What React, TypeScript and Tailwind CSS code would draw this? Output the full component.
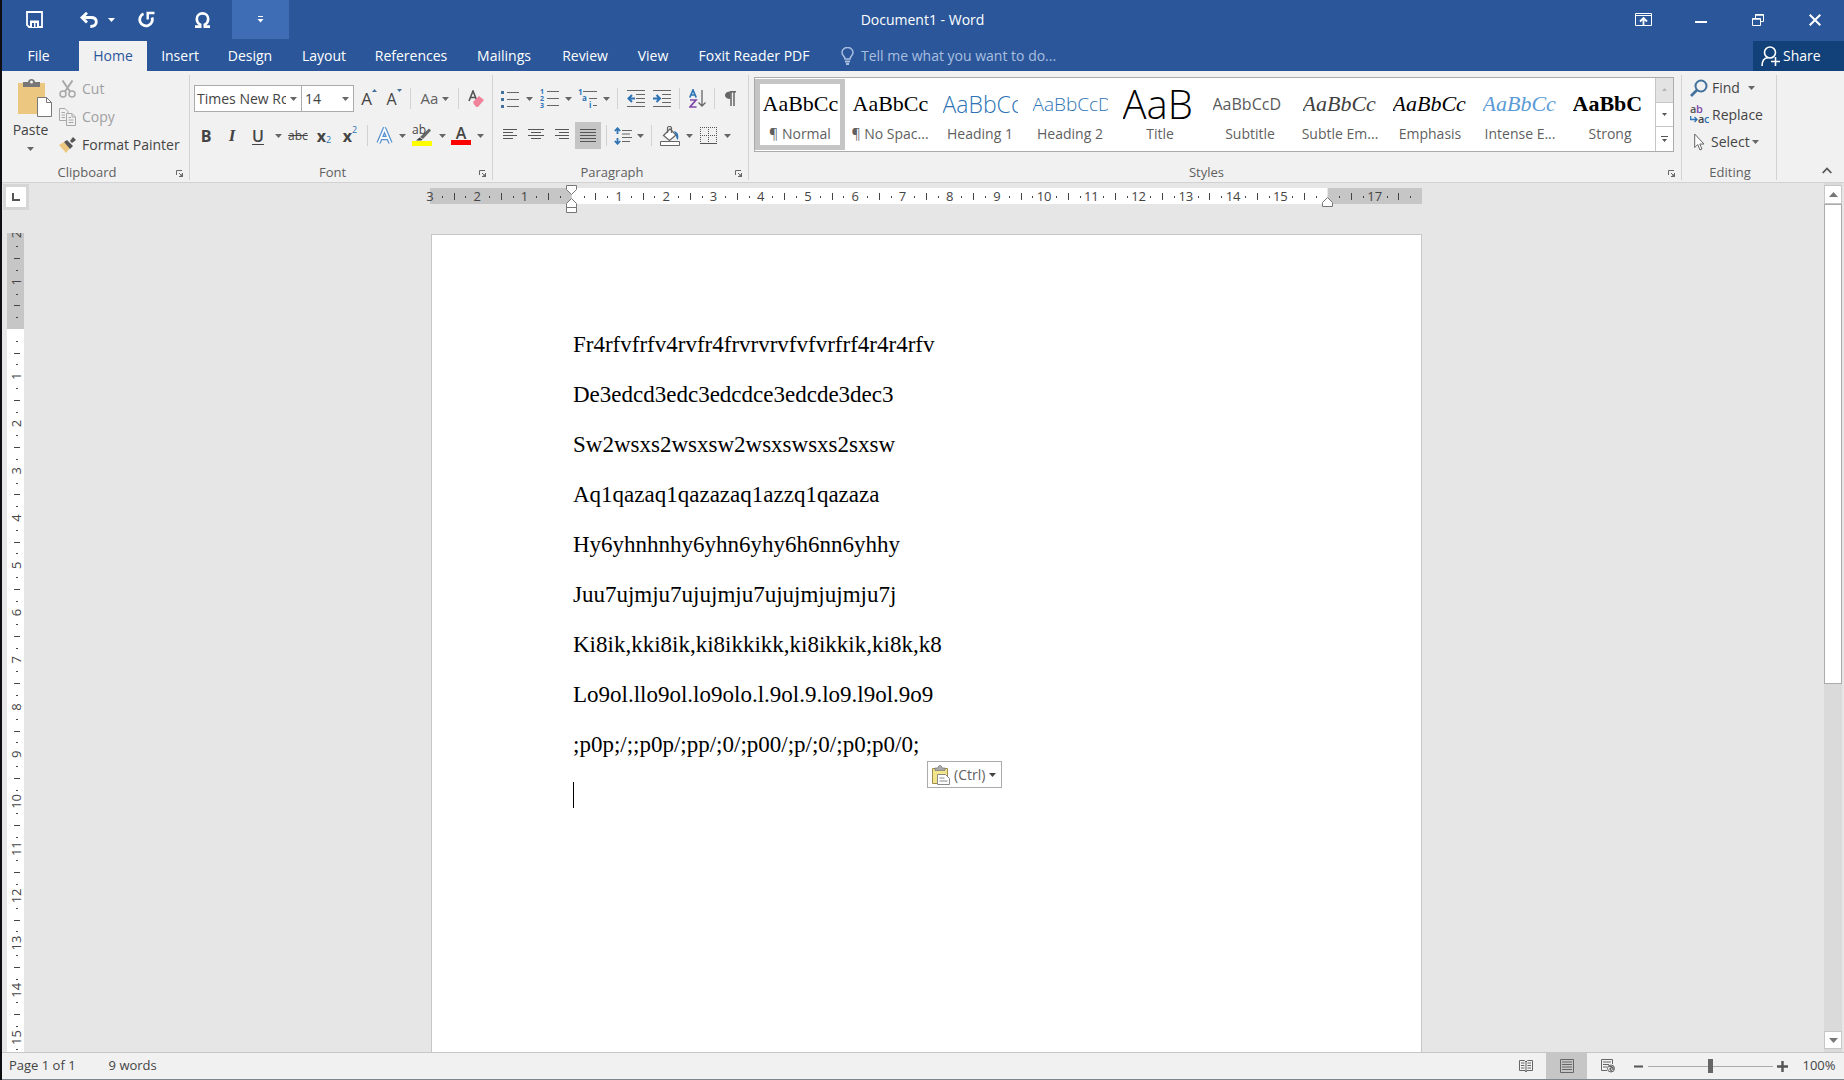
import type { ReactNode } from 'react';

const TABS = [
  { label: 'Insert', width: 'w-[66px]' },
  { label: 'Design', width: 'w-[74px]' },
  { label: 'Layout', width: 'w-[74px]' },
  { label: 'References', width: 'w-[100px]' },
  { label: 'Mailings', width: 'w-[86px]' },
  { label: 'Review', width: 'w-[76px]' },
  { label: 'View', width: 'w-[60px]' },
  { label: 'Foxit Reader PDF', width: 'w-[142px]' },
];

const STYLES = [
  { name: '¶ Normal', sample: 'AaBbCc', look: 'font-[Liberation_Serif,serif] text-[22px] text-black' },
  { name: '¶ No Spac...', sample: 'AaBbCc', look: 'font-[Liberation_Serif,serif] text-[22px] text-black' },
  { name: 'Heading 1', sample: 'AaBbCc', look: 'font-light text-[23px] text-[#2e74b5]' },
  { name: 'Heading 2', sample: 'AaBbCcD', look: 'font-light text-[19px] text-[#2e74b5]' },
  { name: 'Title', sample: 'AaB', look: 'font-light text-[40px] text-black' },
  { name: 'Subtitle', sample: 'AaBbCcD', look: 'text-[16px] text-[#5a5a5a]' },
  { name: 'Subtle Em...', sample: 'AaBbCc', look: 'font-[Liberation_Serif,serif] italic text-[22px] text-[#404040]' },
  { name: 'Emphasis', sample: 'AaBbCc', look: 'font-[Liberation_Serif,serif] italic text-[22px] text-black' },
  { name: 'Intense E...', sample: 'AaBbCc', look: 'font-[Liberation_Serif,serif] italic text-[22px] text-[#5b9bd5]' },
  { name: 'Strong', sample: 'AaBbC', look: 'font-[Liberation_Serif,serif] font-bold text-[22px] text-black' },
];

const LINES = [
  'Fr4rfvfrfv4rvfr4frvrvrvfvfvrfrf4r4r4rfv',
  'De3edcd3edc3edcdce3edcde3dec3',
  'Sw2wsxs2wsxsw2wsxswsxs2sxsw',
  'Aq1qazaq1qazazaq1azzq1qazaza',
  'Hy6yhnhnhy6yhn6yhy6h6nn6yhhy',
  'Juu7ujmju7ujujmju7ujujmjujmju7j',
  'Ki8ik,kki8ik,ki8ikkikk,ki8ikkik,ki8k,k8',
  'Lo9ol.llo9ol.lo9olo.l.9ol.9.lo9.l9ol.9o9',
  ';p0p;/;;p0p/;pp/;0/;p00/;p/;0/;p0;p0/0;',
];

// pixels per centimetre at 100% zoom
const CM = 47.24;

function Arrow({ className = 'text-[#666]' }: { className?: string }) {
  return (
    <svg className={`shrink-0 ${className}`} width="7" height="4" viewBox="0 0 7 4" fill="currentColor">
      <path d="M0 0h7L3.5 4z" />
    </svg>
  );
}

function Tool({ label, width, active, children }: { label: string; width: string; active?: boolean; children: ReactNode }) {
  return (
    <button
      type="button"
      aria-label={label}
      className={`flex h-[27px] shrink-0 items-center justify-center ${width} ${active ? 'bg-[#c5c5c5]' : ''}`}
    >
      {children}
    </button>
  );
}

function More({ label, width = 'w-3' }: { label: string; width?: string }) {
  return (
    <Tool label={`${label} options`} width={width}>
      <Arrow />
    </Tool>
  );
}

function Split({ width }: { width: string }) {
  return (
    <div className={`flex shrink-0 justify-center ${width}`}>
      <div className="h-[21px] w-px bg-[#d2d2d2]" />
    </div>
  );
}

function Group({ label, width, launcher = true, children }: { label: string; width: string; launcher?: boolean; children: ReactNode }) {
  return (
    <section aria-label={label} className={`flex h-[111px] flex-col ${width}`}>
      <div className="flex min-h-0 flex-1 justify-between">
        <div className="min-w-0 flex-1">{children}</div>
        <div className="my-1 -mb-4 w-px shrink-0 bg-[#d2d2d2]" />
      </div>
      <div className="flex h-[18px] items-center pr-[7px] text-[13px] text-[#5f5f5f]">
        <span className={`flex-1 text-center ${launcher ? 'pr-1' : 'pl-2'}`}>{label}</span>
        {launcher && (
          <button type="button" aria-label={`${label} settings`}>
            <svg width="7" height="7" viewBox="0 0 7 7" fill="none" stroke="#666">
              <path d="M.5 5V.5H6M3 3l3 3M6.5 3v3.5H3" />
              <path d="M4 6.5L6.5 4v2.5z" fill="#666" />
            </svg>
          </button>
        )}
      </div>
    </section>
  );
}

function Lines({ rows }: { rows: [number, number][] }) {
  return (
    <svg width="16" height="14" viewBox="0 0 16 14" stroke="#555">
      {rows.map(([from, to], i) => (
        <path key={i} d={`M${from} ${i * 3 + 0.5}H${to}`} />
      ))}
    </svg>
  );
}

function TitleBar() {
  return (
    <div className="flex h-[41px] items-start text-white">
      <div className="flex flex-1">
        <button type="button" aria-label="Save" className="flex h-[39px] w-16 items-center justify-center">
          <svg width="17" height="17" viewBox="0 0 17 17">
            <path d="M1 1h15v15H3l-2-2z" fill="none" stroke="#fff" strokeWidth="1.8" />
            <path d="M4 9.5h9V16H4z" fill="#fff" />
            <path d="M6 12h2v4H6zM9.500 12h1.500v4H9.500z" fill="#2b579a" />
          </svg>
        </button>
        <button type="button" aria-label="Undo" className="flex h-[39px] w-[62px] items-center justify-center gap-[10px]">
          <svg width="18" height="16" viewBox="0 0 18 16" fill="none" stroke="#fff" strokeWidth="2.800">
            <path d="M2 5.500h9c3 0 5.300 1.500 5.300 4.300s-2 4.700-6 4.700" />
            <path d="M7 .8L2 5.500l5 5" />
          </svg>
          <Arrow className="text-white" />
        </button>
        <button type="button" aria-label="Repeat" className="flex h-[39px] w-9 items-center justify-center">
          <svg width="17" height="17" viewBox="0 0 17 17" fill="none" stroke="#fff" strokeWidth="2.800">
            <path d="M5.500 2.800A6.300 6.300 0 1 0 14 6.500" />
            <path d="M9.700 8.500V2H16.500" strokeWidth="2.400" />
          </svg>
        </button>
        <button type="button" aria-label="Symbol" className="flex h-[39px] w-[68px] items-center justify-center pl-2">
          <svg width="17" height="16" viewBox="0 0 17 16" fill="none" stroke="#fff" strokeWidth="2.600">
            <path d="M1 14.600h5.200v-2C4 11.500 2.800 9.500 2.800 7c0-3.500 2.500-5.600 5.700-5.600S14.200 3.500 14.200 7c0 2.500-1.200 4.500-3.400 5.600v2H16" />
          </svg>
        </button>
        <button type="button" aria-label="Customize toolbar" className="flex h-[39px] w-[57px] items-center justify-center bg-[#3e6db5]">
          <svg width="7" height="7" viewBox="0 0 7 7" fill="#fff">
            <path d="M1 0h5v1H1zM.5 3h6L3.500 6.500z" />
          </svg>
        </button>
      </div>
      <h1 className="pt-[10px] text-sm">Document1 - Word</h1>
      <div className="flex flex-1 justify-end pr-px">
        <button type="button" aria-label="Ribbon display" className="flex h-[39px] w-[57px] items-center justify-center">
          <svg width="17" height="13" viewBox="0 0 17 13" fill="none" stroke="#fff">
            <path d="M.5.5h16v12H.5zM.5 2.500h16" />
            <path d="M8.500 12V5M5 8.500L8.500 5 12 8.500" strokeWidth="1.800" />
          </svg>
        </button>
        <button type="button" aria-label="Minimize" className="flex h-[39px] w-[57px] items-center justify-center pt-1">
          <svg width="12" height="2" viewBox="0 0 12 2" fill="#fff">
            <path d="M0 0h12v2H0z" />
          </svg>
        </button>
        <button type="button" aria-label="Restore" className="flex h-[39px] w-[57px] items-center justify-center">
          <svg width="12" height="12" viewBox="0 0 12 12" fill="none" stroke="#fff">
            <path d="M.5 4.500h8v7h-8zM3.500 4V.5h8v7H9" />
            <path d="M.5 5h8M3.500 1h8" strokeWidth="1.500" />
          </svg>
        </button>
        <button type="button" aria-label="Close" className="flex h-[39px] w-[57px] items-center justify-center">
          <svg width="12" height="12" viewBox="0 0 12 12" stroke="#fff" strokeWidth="2">
            <path d="M.7.7l10.600 10.600M11.300.7L.7 11.300" />
          </svg>
        </button>
      </div>
    </div>
  );
}

function TabBar() {
  return (
    <nav className="flex h-[30px] text-sm text-white">
      <button type="button" className="w-[77px] pr-1">
        File
      </button>
      <button type="button" className="w-[68px] bg-[#f1f1f1] text-[#2b579a]">
        Home
      </button>
      {TABS.map((tab) => (
        <button key={tab.label} type="button" className={`whitespace-nowrap ${tab.width}`}>
          {tab.label}
        </button>
      ))}
      <label className="flex flex-1 items-center gap-[7px] pl-4">
        <svg width="13" height="18" viewBox="0 0 13 18" fill="none" stroke="#a9bfe0" strokeWidth="1.500">
          <path d="M4 12c0-2.500-3-3.500-3-6.500a5.500 5 0 0 1 11 0c0 3-3 4-3 6.500z" />
          <path d="M4 14.500h5M5 17h3" strokeWidth="2" />
        </svg>
        <input
          type="text"
          aria-label="Tell me"
          placeholder="Tell me what you want to do..."
          className="w-60 bg-transparent outline-none placeholder:text-[#a9bfe0]"
        />
      </label>
      <button type="button" className="flex w-[91px] items-center gap-[3px] bg-[#124078] pl-2">
        <svg width="19" height="20" viewBox="0 0 19 20" fill="none" stroke="#fff" strokeWidth="1.600">
          <circle cx="9" cy="6.500" r="5.500" />
          <path d="M1 20c0-5 2.500-8 6-8.500M14.500 11v9M10 15.500h9" />
        </svg>
        Share
      </button>
    </nav>
  );
}

function ClipboardGroup() {
  return (
    <Group label="Clipboard" width="w-[188px]">
      <div className="flex">
        <button type="button" className="flex w-[57px] flex-col items-center pt-2 text-sm text-[#444]">
          <svg className="ml-2" width="34" height="38" viewBox="0 0 34 38">
            <path d="M0 4h27v31H0z" fill="#ecc77f" />
            <path d="M5 8V3h5c0-4 7-4 7 0h5v5z" fill="#777" />
            <circle cx="13.500" cy="3" r="1.500" fill="#f1f1f1" />
            <path d="M19.500 18.500h9l5 5v14h-14z" fill="#fff" stroke="#777" />
            <path d="M28.500 18.500v5h5" fill="none" stroke="#777" />
          </svg>
          <span className="leading-[26px]">Paste</span>
          <Arrow className="mt-1 text-[#666]" />
        </button>
        <div className="flex flex-col pt-1 text-sm text-[#a0a0a0]">
          <button type="button" className="flex h-7 items-center gap-[6px]">
            <svg width="17" height="18" viewBox="0 0 17 18" fill="none" stroke="#a8a8a8" strokeWidth="1.500">
              <circle cx="4" cy="14" r="3" />
              <circle cx="13" cy="14" r="3" />
              <path d="M3.500.5L11 11.500M13.500.5L6 11.500" strokeWidth="2" />
            </svg>
            Cut
          </button>
          <button type="button" className="flex h-7 items-center gap-[6px]">
            <svg width="17" height="18" viewBox="0 0 17 18" fill="none" stroke="#a8a8a8">
              <path d="M7 12.500H.5V.5H6l3 3V5M2.500 4.500H6M2.500 7H6M2.500 9.500H6" />
              <path d="M7.500 5.500H13l3.500 3.500v8.500h-9zM13 5.500V9h3.500M9.500 9.500H12M9.500 12h5M9.500 14.500h5" />
            </svg>
            Copy
          </button>
          <button type="button" className="flex h-7 items-center gap-[6px] text-[#444]">
            <svg width="17" height="16" viewBox="0 0 17 16">
              <path d="M0 8l5-3 6 6-4 5z" fill="#ecc77f" />
              <path d="M5 5l3-2 6 6-3 3z" fill="#555" />
              <path d="M11 4l3-4 3 3-4 3z" fill="#555" />
            </svg>
            <span className="whitespace-nowrap">Format Painter</span>
          </button>
        </div>
      </div>
    </Group>
  );
}

function FontGroup() {
  return (
    <Group label="Font" width="w-[303px]">
      <div className="flex flex-col gap-[10px] pl-1 pt-[14px] text-[#444]">
        <div className="flex h-[27px] items-center">
          <div className="flex h-[27px] w-[108px] items-center border border-[#ababab] bg-white">
            <select aria-label="Font name" className="w-[91px] appearance-none overflow-hidden whitespace-nowrap pl-[2px] text-sm outline-none">
              <option>Times New Roman</option>
            </select>
            <div className="flex flex-1 justify-center">
              <Arrow />
            </div>
          </div>
          <div className="flex h-[27px] w-[52px] items-center border border-l-0 border-[#ababab] bg-white">
            <select aria-label="Font size" className="w-9 appearance-none pl-[3px] text-sm outline-none">
              <option>14</option>
            </select>
            <div className="flex flex-1 justify-center">
              <Arrow />
            </div>
          </div>
          <Tool label="Grow font" width="w-[30px]">
            <span className="text-[17px] leading-5">A</span>
            <svg className="mb-4" width="5" height="3" viewBox="0 0 5 3" fill="#41719c">
              <path d="M0 3h5L2.500 0z" />
            </svg>
          </Tool>
          <Tool label="Shrink font" width="w-5">
            <span className="text-base leading-5">A</span>
            <svg className="mb-4" width="5" height="3" viewBox="0 0 5 3" fill="#41719c">
              <path d="M0 0h5L2.500 3z" />
            </svg>
          </Tool>
          <Split width="w-3" />
          <Tool label="Change case" width="w-[38px]">
            <span className="pr-1 text-[15px] text-[#5f5f5f]">Aa</span>
            <Arrow />
          </Tool>
          <Split width="w-2" />
          <Tool label="Clear formatting" width="w-7">
            <svg width="16" height="18" viewBox="0 0 16 18">
              <path d="M1 11L5 1l4 10M2.500 7.500h5" fill="none" stroke="#555" strokeWidth="1.600" />
              <path d="M5 12l6-6 5 4-6 7H7z" fill="#f0839b" />
              <path d="M4 13l4 4" stroke="#f1f1f1" />
            </svg>
          </Tool>
        </div>
        <div className="flex h-[27px] items-center">
          <Tool label="Bold" width="w-6">
            <b className="text-base">B</b>
          </Tool>
          <Tool label="Italic" width="w-7">
            <i className="font-[Liberation_Serif,serif] text-[17px] font-bold">I</i>
          </Tool>
          <Tool label="Underline" width="w-6">
            <span className="text-base font-semibold underline underline-offset-2">U</span>
          </Tool>
          <More label="Underline" width="w-4" />
          <Tool label="Strikethrough" width="w-6">
            <s className="text-[12px]">abc</s>
          </Tool>
          <Tool label="Subscript" width="w-7">
            <b className="text-base">x</b>
            <span className="pt-2 text-[9px] text-[#2e74b5]">2</span>
          </Tool>
          <Tool label="Superscript" width="w-6">
            <b className="text-base">x</b>
            <span className="pb-3 text-[9px] text-[#2e74b5]">2</span>
          </Tool>
          <Split width="w-[10px]" />
          <Tool label="Text effects" width="w-6">
            <svg width="17" height="18" viewBox="0 0 17 18">
              <path d="M2.500 16L8.500 2l6 14M5 11h7" fill="none" stroke="#5b93cf" strokeWidth="4.400" strokeLinejoin="round" />
              <path d="M2.500 16L8.500 2l6 14M5 11h7" fill="none" stroke="#fff" strokeWidth="1.800" />
            </svg>
          </Tool>
          <More label="Text effects" width="w-3" />
          <Tool label="Highlight color" width="w-7">
            <span className="relative flex h-5 w-5 items-end">
              <span className="absolute -top-1 left-0 text-[12px] leading-4">ab</span>
              <svg width="20" height="19" viewBox="0 0 20 19">
                <path d="M17 1.500l2 2L11 12l-3-2z" fill="#666" />
                <path d="M7.500 10.500l3 2-1 1H4z" fill="#444" />
                <path d="M0 14h20v5H0z" fill="#ff0" />
              </svg>
            </span>
          </Tool>
          <More label="Highlight color" />
          <Tool label="Font color" width="w-[26px]">
            <span className="flex w-5 flex-col items-center border-b-[5px] border-[#f00] text-base font-semibold leading-[14px]">A</span>
          </Tool>
          <More label="Font color" />
        </div>
      </div>
    </Group>
  );
}

function ParagraphGroup() {
  return (
    <Group label="Paragraph" width="w-64">
      <div className="flex flex-col gap-[10px] pl-1 pt-[14px] text-[#444]">
        <div className="flex h-[27px] items-center">
          <Tool label="Bullets" width="w-[26px]">
            <svg width="18" height="18" viewBox="0 0 18 18" stroke="#666">
              <path d="M6 2.500h12M6 9.500h12M6 16.500h12" />
              <path d="M0 2.500h3M0 9.500h3M0 16.500h3" stroke="#41719c" strokeWidth="3" />
            </svg>
          </Tool>
          <More label="Bullets" />
          <Tool label="Numbering" width="w-7">
            <svg width="19" height="19" viewBox="0 0 19 19">
              <path d="M7 2.500h12M7 9.500h12M7 16.500h12" stroke="#666" />
              <g fill="#2e74b5" fontSize="7" fontWeight="bold">
                <text x="0" y="5">1</text>
                <text x="0" y="12">2</text>
                <text x="0" y="19">3</text>
              </g>
            </svg>
          </Tool>
          <More label="Numbering" width="w-[10px]" />
          <Tool label="Multilevel list" width="w-7">
            <svg width="19" height="19" viewBox="0 0 19 19">
              <path d="M5 2.500h14M11 9.500h8M15 16.500h4" stroke="#666" />
              <g fill="#2e74b5" fontSize="8" fontWeight="bold">
                <text x="0" y="6">1</text>
                <text x="4" y="12">a</text>
                <text x="11" y="19">i</text>
              </g>
            </svg>
          </Tool>
          <More label="Multilevel list" width="w-[10px]" />
          <Split width="w-3" />
          <Tool label="Decrease indent" width="w-[26px]">
            <svg width="18" height="17" viewBox="0 0 18 17" stroke="#666" fill="none">
              <path d="M0 .5h18M9 4.500h9M9 8.500h9M9 12.500h9M0 16.500h18" />
              <path d="M8 8.500H2M5 5L1.500 8.500 5 12" stroke="#2e74b5" strokeWidth="2" />
            </svg>
          </Tool>
          <Tool label="Increase indent" width="w-[26px]">
            <svg width="18" height="17" viewBox="0 0 18 17" stroke="#666" fill="none">
              <path d="M0 .5h18M9 4.500h9M9 8.500h9M9 12.500h9M0 16.500h18" />
              <path d="M0 8.500h6M3.500 5L7 8.500 3.500 12" stroke="#2e74b5" strokeWidth="2" />
            </svg>
          </Tool>
          <Split width="w-2" />
          <Tool label="Sort" width="w-7">
            <svg width="17" height="19" viewBox="0 0 17 19" fill="none" strokeWidth="1.700">
              <path d="M.8 8.500L4 1l3.200 7.500M2 6h4" stroke="#2e74b5" />
              <path d="M1 11h6l-6 7h6.500" stroke="#8048a8" />
              <path d="M13 1v16M9.500 13.500L13 17l3.500-3.500" stroke="#666" strokeWidth="1.300" />
            </svg>
          </Tool>
          <Split width="w-[6px]" />
          <Tool label="Show marks" width="w-[26px]">
            <svg width="11" height="15" viewBox="0 0 11 15" fill="none" stroke="#666" strokeWidth="1.500">
              <path d="M11 .8H5M6 1v14M9 1v14" />
              <path d="M5.500.5v7.500C2 8 0 6.500 0 4.200S2 .5 5.500.5z" fill="#666" stroke="none" />
            </svg>
          </Tool>
        </div>
        <div className="flex h-[27px] items-center">
          <Tool label="Align left" width="w-[26px]">
            <Lines rows={[[1, 15], [1, 11], [1, 15], [1, 11]]} />
          </Tool>
          <Tool label="Center" width="w-[26px]">
            <Lines rows={[[0, 16], [3, 13], [0, 16], [3, 13]]} />
          </Tool>
          <Tool label="Align right" width="w-[26px]">
            <Lines rows={[[1, 15], [5, 15], [1, 15], [5, 15]]} />
          </Tool>
          <Tool label="Justify" width="w-[26px]" active>
            <Lines rows={[[0, 16], [0, 16], [0, 16], [0, 16], [0, 16]]} />
          </Tool>
          <Split width="w-[10px]" />
          <Tool label="Line spacing" width="w-6">
            <svg width="18" height="18" viewBox="0 0 18 18" fill="none" stroke="#666">
              <path d="M8 3.500h10M8 7h8M8 10.500h10M8 14.500h8" />
              <path d="M3.500 1.500V7M.8 4l2.700-2.800L6.200 4M3.500 11v5.500M.8 14l2.700 2.800L6.200 14" stroke="#2e74b5" strokeWidth="1.800" />
            </svg>
          </Tool>
          <More label="Line spacing" width="w-[10px]" />
          <Split width="w-3" />
          <Tool label="Shading" width="w-[26px]">
            <svg width="20" height="20" viewBox="0 0 20 20" fill="none" stroke="#666">
              <path d="M3.500 9.500L10 3l6 6-6.500 5.500z" fill="#fff" strokeWidth="1.300" />
              <path d="M7.500 7V2c0-2 4-2 4 0v5" strokeWidth="1.200" />
              <path d="M14 5c4 1 5 4 4 9-1.500-1-2-3-2-5z" fill="#2e74b5" stroke="none" />
              <path d="M.5 15.500h19v4H.5z" fill="#fff" />
            </svg>
          </Tool>
          <More label="Shading" />
          <Tool label="Borders" width="w-[26px]">
            <svg width="17" height="17" viewBox="0 0 17 17" fill="none" stroke="#555" strokeDasharray="1 1">
              <path d="M.5 0v17M8.500 0v17M16.500 0v17M0 .5h17M0 8.500h17" />
              <path d="M0 16.500h17" strokeDasharray="none" />
            </svg>
          </Tool>
          <More label="Borders" />
        </div>
      </div>
    </Group>
  );
}

function StylesGroup() {
  return (
    <Group label="Styles" width="min-w-0 flex-1">
      <div className="pl-[5px] pr-[7px] pt-[6px]">
        <div className="flex h-[75px] border border-[#ababab] bg-white">
          <div className="flex min-w-0 flex-1 items-center overflow-hidden">
            {STYLES.map((style, i) => (
              <button
                key={style.name}
                type="button"
                className={`flex h-[71px] w-[90px] shrink-0 flex-col items-center border-[5px] ${i === 0 ? 'border-[#c5c5c5]' : 'border-transparent'}`}
              >
                <span className={`flex h-10 w-[75px] items-center overflow-hidden whitespace-nowrap leading-10 ${style.look}`}>
                  {style.sample}
                </span>
                <span className="whitespace-nowrap text-sm text-[#5f5f5f]">{style.name}</span>
              </button>
            ))}
          </div>
          <div className="flex w-[18px] flex-col border-l border-[#c6c6c6]">
            <button type="button" aria-label="Previous styles" className="flex flex-1 items-center justify-center bg-[#e3e3e3]">
              <svg width="5" height="3" viewBox="0 0 5 3" fill="#b5b5b5">
                <path d="M0 3h5L2.500 0z" />
              </svg>
            </button>
            <button type="button" aria-label="Next styles" className="flex flex-1 items-center justify-center border-y border-[#c6c6c6]">
              <svg width="5" height="3" viewBox="0 0 5 3" fill="#555">
                <path d="M0 0h5L2.500 3z" />
              </svg>
            </button>
            <button type="button" aria-label="All styles" className="flex flex-1 items-center justify-center">
              <svg width="7" height="6" viewBox="0 0 7 6" fill="#555">
                <path d="M0 0h7v1H0zM1 3h5L3.500 6z" />
              </svg>
            </button>
          </div>
        </div>
      </div>
    </Group>
  );
}

function EditingGroup() {
  return (
    <Group label="Editing" width="w-[95px]" launcher={false}>
      <div className="flex flex-col pl-2 pt-[3px] text-sm text-[#444]">
        <button type="button" className="flex h-[27px] items-center gap-1">
          <svg width="18" height="18" viewBox="0 0 18 18" fill="none" stroke="#41719c">
            <circle cx="11" cy="7" r="5.500" strokeWidth="2" />
            <path d="M7 11l-6 6" strokeWidth="2.600" />
          </svg>
          Find
          <Arrow className="ml-1 text-[#666]" />
        </button>
        <button type="button" className="flex h-[27px] items-center gap-[3px]">
          <svg width="19" height="19" viewBox="0 0 19 19" fontSize="11" fontWeight="600">
            <text x="0" y="8" fill="#555">a</text>
            <text x="6" y="8" fill="#8048a8">b</text>
            <text x="8" y="18" fill="#444">a</text>
            <text x="14" y="18" fill="#2e74b5">c</text>
            <path d="M.7 11v3.500H7M4.500 12L7 14.500 4.500 17" fill="none" stroke="#2e74b5" strokeWidth="1.300" />
          </svg>
          Replace
        </button>
        <button type="button" className="flex h-[27px] items-center gap-[2px] pl-1">
          <svg className="mr-1" width="11" height="18" viewBox="0 0 11 18" fill="#fff" stroke="#666">
            <path d="M.7 1v13.500l3-3 2.300 5.500 2-1-2.200-5H10z" />
          </svg>
          Select
          <Arrow />
        </button>
      </div>
    </Group>
  );
}

function HorizontalRuler() {
  const zero = 3 * CM;
  const quarters = Array.from({ length: 83 }, (_, i) => i - 11);
  return (
    <svg className="block overflow-visible" width="992" height="28" viewBox="0 0 992 28">
      <path d="M0 3h992v16H0z" fill="#c6c6c6" />
      <path d={`M${zero} 3h${16 * CM}v16h${-16 * CM}z`} fill="#fff" />
      <g fill="#444" fontSize="13" textAnchor="middle">
        <text x="0" y="16">3</text>
        {quarters.map((q) => {
          const x = zero + (q * CM) / 4;
          if (q === 0 || q === 64) return null;
          if (q % 4 === 0) return <text key={q} x={x} y="16">{Math.abs(q / 4)}</text>;
          if (q % 2 === 0) return <path key={q} d={`M${Math.round(x)} 8h1v7h-1z`} />;
          return <path key={q} d={`M${Math.round(x)} 11h1v2h-1z`} />;
        })}
      </g>
      <g fill="#fff" stroke="#777">
        <path d="M136.500.5h10v4l-5 5-5-5zM136.500 22.500v-4l5-5 5 5v4zM136.500 22.500h10v5h-10z" />
        <path d="M892.500 21.500v-4l5-5 5 5v4z" />
      </g>
    </svg>
  );
}

function VerticalRuler() {
  const zero = 96;
  const quarters = Array.from({ length: 168 }, (_, i) => i - 8);
  return (
    <svg className="block min-h-0 w-[17px] flex-1" width="17">
      <rect width="17" height="100%" fill="#fff" />
      <rect width="17" height="96" fill="#c6c6c6" />
      <g fill="#444" fontSize="13" textAnchor="middle">
        {quarters.map((q) => {
          const y = zero + (q * CM) / 4;
          if (q === 0) return null;
          if (q % 4 === 0) {
            return (
              <text key={q} transform={`translate(14 ${y}) rotate(-90)`}>
                {Math.abs(q / 4)}
              </text>
            );
          }
          if (q % 2 === 0) return <path key={q} d={`M7 ${Math.round(y)}h6v1H7z`} />;
          return <path key={q} d={`M9 ${Math.round(y)}h2v1H9z`} />;
        })}
      </g>
    </svg>
  );
}

function Page() {
  return (
    <article className="relative ml-px mt-[21px] min-h-0 w-[991px] flex-1 border border-b-0 border-[#c6c6c6] bg-white pl-[141px] pt-[97px]">
      <div className="font-[Liberation_Serif,serif] text-[23px] leading-[26px] text-black">
        {LINES.map((line) => (
          <p key={line} className="mb-6">
            {line}
          </p>
        ))}
        <div className="h-[26px] w-px bg-black" />
      </div>
      {/* floating paste options */}
      <button
        type="button"
        className="absolute left-[495px] top-[526px] flex h-[27px] w-[75px] items-center gap-1 whitespace-nowrap border border-[#ababab] bg-white pl-1 text-sm text-[#5f5f5f]"
      >
        <svg className="shrink-0" width="18" height="20" viewBox="0 0 18 20">
          <path d="M.5 3.500h15v15H.5z" fill="#f3e58c" stroke="#a08c50" />
          <path d="M3 5.500V3h3c0-3.500 4-3.500 4 0h3v2.500z" fill="#aaa" stroke="#777" strokeWidth=".7" />
          <path d="M5.500 9.500h8l4 4v6h-12z" fill="#fff" stroke="#888" />
          <path d="M7.500 13h5M7.500 16h8" stroke="#888" />
        </svg>
        <span>(Ctrl)</span>
        <Arrow className="text-[#444]" />
      </button>
    </article>
  );
}

function ScrollBar() {
  return (
    <div className="flex w-[18px] shrink-0 flex-col bg-[#dadada] pb-[3px] pt-[2px]">
      <button type="button" aria-label="Scroll up" className="flex h-[19px] items-center justify-center border border-[#c6c6c6] bg-white">
        <svg width="9" height="5" viewBox="0 0 9 5" fill="#777">
          <path d="M0 5h9L4.500 0z" />
        </svg>
      </button>
      <div className="flex min-h-0 flex-1 flex-col">
        <div className="h-[58%] border border-[#ababab] bg-white" />
      </div>
      <button type="button" aria-label="Scroll down" className="flex h-[18px] items-center justify-center border border-[#c6c6c6] bg-white">
        <svg width="9" height="5" viewBox="0 0 9 5" fill="#777">
          <path d="M0 0h9L4.500 5z" />
        </svg>
      </button>
    </div>
  );
}

function StatusBar() {
  return (
    <footer className="flex h-7 shrink-0 items-center border-b border-t border-b-[#7f858f] border-t-[#c6c6c6] bg-[#f1f1f1] pl-[7px] text-[13px] text-[#444]">
      <span>Page 1 of 1</span>
      <span className="flex-1 pl-[33px]">9 words</span>
      <button type="button" aria-label="Read mode" className="flex h-full w-[41px] items-center justify-center">
        <svg width="14" height="13" viewBox="0 0 14 13" fill="none" stroke="#666">
          <path d="M7 2L5.500.5h-5v10H6l1 1.500 1-1.500h5.500V.5h-5zM7 2v10M2 3h3.500M2 5.500h3.500M2 8h3.500M8.500 3H12M8.500 5.500H12M8.500 8H12" />
        </svg>
      </button>
      <button type="button" aria-label="Print layout" className="flex h-full w-[41px] items-center justify-center bg-[#c6c6c6]">
        <svg width="14" height="14" viewBox="0 0 14 14" fill="none" stroke="#666">
          <path d="M.5.500h13v13H.5zM2 3h10M2 5.500h10M2 8h10M2 10.500h10" />
        </svg>
      </button>
      <button type="button" aria-label="Web layout" className="flex h-full w-[41px] items-center justify-center">
        <svg width="14" height="14" viewBox="0 0 14 14" fill="none" stroke="#666">
          <path d="M6 11.500H.5V.5h11V5M2 3h8M2 5.500h6M2 8h4" />
          <circle cx="10" cy="9.500" r="3.500" fill="#f1f1f1" />
          <path d="M8 7l3 1-2 2 2 2.500M12 8v3" strokeWidth="1.500" />
        </svg>
      </button>
      <button type="button" aria-label="Zoom out" className="flex w-5 justify-end">
        <svg width="15" height="11" viewBox="0 0 15 11" stroke="#555" strokeWidth="2">
          <path d="M1 5.500h9" />
        </svg>
      </button>
      <input
        type="range"
        aria-label="Zoom"
        min={0}
        max={100}
        defaultValue={50}
        className="h-[14px] w-[125px] appearance-none bg-[linear-gradient(#ababab,#ababab)] bg-[length:100%_1px] bg-center bg-no-repeat [&::-webkit-slider-thumb]:h-[14px] [&::-webkit-slider-thumb]:w-[5px] [&::-webkit-slider-thumb]:appearance-none [&::-webkit-slider-thumb]:bg-[#666]"
      />
      <button type="button" aria-label="Zoom in" className="pl-1">
        <svg width="11" height="11" viewBox="0 0 11 11" stroke="#555" strokeWidth="2.400">
          <path d="M0 5.500h11M5.500 0v11" />
        </svg>
      </button>
      <button type="button" className="w-14 pl-[6px]">
        100%
      </button>
    </footer>
  );
}

export default function App() {
  return (
    <div className="flex h-screen flex-col overflow-hidden border-l-2 border-[#0d0d12] bg-[#e6e6e6] font-['Open_Sans','Noto_Sans',sans-serif]">
      <header className="shrink-0 bg-[#2b579a]">
        <TitleBar />
        <TabBar />
      </header>

      <div className="flex h-[112px] shrink-0 border-b border-[#d2d2d2] bg-[#f1f1f1]">
        <ClipboardGroup />
        <FontGroup />
        <ParagraphGroup />
        <StylesGroup />
        <EditingGroup />
        <div className="flex w-[67px] items-end justify-end pb-2 pr-3">
          <button type="button" aria-label="Collapse ribbon">
            <svg width="10" height="7" viewBox="0 0 10 7" fill="none" stroke="#555" strokeWidth="1.800">
              <path d="M.7 6L5 1.500 9.300 6" />
            </svg>
          </button>
        </div>
      </div>

      <main className="flex min-h-0 flex-1 pr-[2px]">
        <div className="flex w-[26px] shrink-0 flex-col pl-[5px]">
          <button type="button" aria-label="Tab stop" className="-ml-1 mb-[23px] mt-px flex h-[26px] w-[26px] items-center justify-center border-[3px] border-[#d6d6d6] bg-white">
            <svg width="8" height="8" viewBox="0 0 8 8" fill="none" stroke="#555" strokeWidth="2">
              <path d="M1 0v7h7" />
            </svg>
          </button>
          <VerticalRuler />
        </div>
        <div className="flex min-w-0 flex-1 flex-col items-center overflow-hidden pt-[2px]">
          <HorizontalRuler />
          <Page />
        </div>
        <ScrollBar />
      </main>

      <StatusBar />
    </div>
  );
}
